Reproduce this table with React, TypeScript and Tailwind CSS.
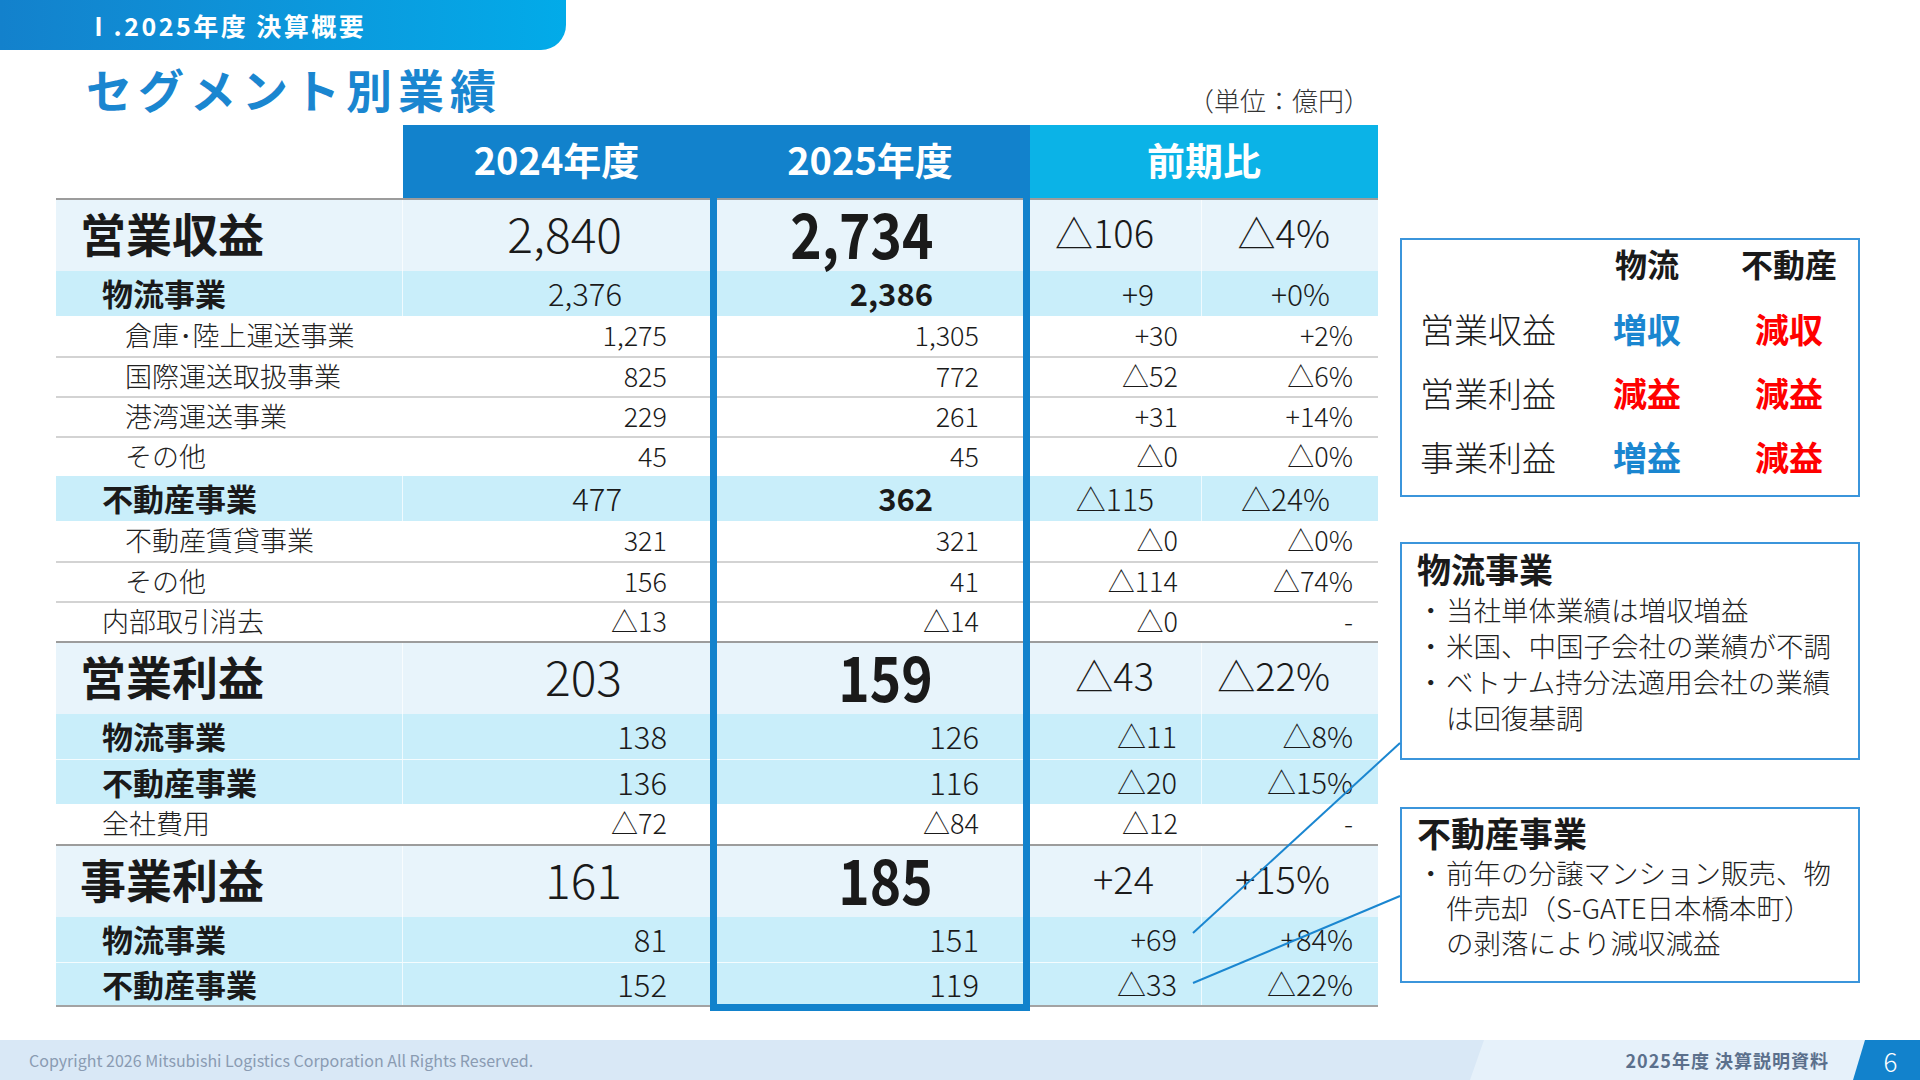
type RowType = 'big' | 'midA' | 'midB' | 'sub' | 'plain'
type Line = 'none' | 'light' | 'dark' | 'white'

interface Row {
  t: RowType
  label: string
  v24: string
  v25: string
  d: string
  p: string
  line?: Line
}

const ROWS: Row[] = [
  { t: 'big', label: '営業収益', v24: '2,840', v25: '2,734', d: '△106', p: '△4%', line: 'dark' },
  { t: 'midA', label: '物流事業', v24: '2,376', v25: '2,386', d: '+9', p: '+0%' },
  { t: 'sub', label: '倉庫･陸上運送事業', v24: '1,275', v25: '1,305', d: '+30', p: '+2%' },
  { t: 'sub', label: '国際運送取扱事業', v24: '825', v25: '772', d: '△52', p: '△6%', line: 'light' },
  { t: 'sub', label: '港湾運送事業', v24: '229', v25: '261', d: '+31', p: '+14%', line: 'light' },
  { t: 'sub', label: 'その他', v24: '45', v25: '45', d: '△0', p: '△0%', line: 'light' },
  { t: 'midA', label: '不動産事業', v24: '477', v25: '362', d: '△115', p: '△24%' },
  { t: 'sub', label: '不動産賃貸事業', v24: '321', v25: '321', d: '△0', p: '△0%' },
  { t: 'sub', label: 'その他', v24: '156', v25: '41', d: '△114', p: '△74%', line: 'light' },
  { t: 'plain', label: '内部取引消去', v24: '△13', v25: '△14', d: '△0', p: '-', line: 'light' },
  { t: 'big', label: '営業利益', v24: '203', v25: '159', d: '△43', p: '△22%', line: 'dark' },
  { t: 'midB', label: '物流事業', v24: '138', v25: '126', d: '△11', p: '△8%' },
  { t: 'midB', label: '不動産事業', v24: '136', v25: '116', d: '△20', p: '△15%', line: 'white' },
  { t: 'plain', label: '全社費用', v24: '△72', v25: '△84', d: '△12', p: '-' },
  { t: 'big', label: '事業利益', v24: '161', v25: '185', d: '+24', p: '+15%', line: 'dark' },
  { t: 'midB', label: '物流事業', v24: '81', v25: '151', d: '+69', p: '+84%' },
  { t: 'midB', label: '不動産事業', v24: '152', v25: '119', d: '△33', p: '△22%', line: 'white' },
]

const LINE: Record<Line, string> = {
  none: '',
  light: 'border-t-2 border-[#d3d3d3]',
  dark: 'border-t-2 border-[#9c9c9c]',
  white: 'border-t border-white/80',
}

interface RowStyle {
  row: string
  cell: string
  label: string
  v24: string
  v25: string
  v25Inner: string
  d: string
  p: string
  sep: boolean
}

const STYLE: Record<RowType, RowStyle> = {
  big: {
    row: 'h-[73px] bg-[#e8f4fb]',
    cell: 'pb-[8px]',
    label: 'pl-[24px] text-[46px] font-bold',
    v24: 'pr-[88px] text-[48px] font-light',
    v25: 'pr-[97px] text-[62px] font-bold',
    v25Inner: 'inline-block origin-right scale-x-[0.86]',
    d: 'pr-[47px] text-[38px] font-light',
    p: 'pr-[48px] text-[38px] font-light',
    sep: true,
  },
  midA: {
    row: 'h-[45px] bg-[#c9eefa]',
    cell: 'pb-[2px]',
    label: 'pl-[46px] text-[31px] font-bold',
    v24: 'pr-[88px] text-[31px] font-light',
    v25: 'pr-[97px] text-[31px] font-bold',
    v25Inner: '',
    d: 'pr-[47px] text-[30px] font-light',
    p: 'pr-[48px] text-[30px] font-light',
    sep: true,
  },
  midB: {
    row: 'h-[45px] bg-[#c9eefa]',
    cell: 'pb-[2px]',
    label: 'pl-[46px] text-[31px] font-bold',
    v24: 'pr-[43px] text-[31px] font-light',
    v25: 'pr-[51px] text-[31px] font-light',
    v25Inner: '',
    d: 'pr-[24px] text-[29px] font-light',
    p: 'pr-[25px] text-[29px] font-light',
    sep: true,
  },
  sub: {
    row: 'h-[40px] bg-white',
    cell: 'pb-[4px]',
    label: 'pl-[69px] text-[27px] font-light text-[#222]',
    v24: 'pr-[43px] text-[27px] font-light',
    v25: 'pr-[51px] text-[27px] font-light',
    v25Inner: '',
    d: 'pr-[24px] text-[27px] font-light',
    p: 'pr-[25px] text-[27px] font-light',
    sep: false,
  },
  plain: {
    row: 'h-[40px] bg-white',
    cell: 'pb-[4px]',
    label: 'pl-[46px] text-[27px] font-light text-[#222]',
    v24: 'pr-[43px] text-[27px] font-light',
    v25: 'pr-[51px] text-[27px] font-light',
    v25Inner: '',
    d: 'pr-[24px] text-[27px] font-light',
    p: 'pr-[25px] text-[27px] font-light',
    sep: false,
  },
}

function Table() {
  return (
    <div className="relative">
      <div className="grid h-[73px] grid-cols-[347px_307px_320px_348px] text-[38px] font-bold leading-none text-white">
        <div />
        <div className="flex items-center justify-center bg-[#1282cc] pb-[6px]">2024年度</div>
        <div className="flex items-center justify-center bg-[#1282cc] pb-[6px]">2025年度</div>
        <div className="flex items-center justify-center bg-[#0bb3e7] pb-[6px]">前期比</div>
      </div>
      {ROWS.map((r, i) => {
        const s = STYLE[r.t]
        const last = i === ROWS.length - 1
        return (
          <div
            key={i}
            className={`grid grid-cols-[347px_307px_320px_172px_176px] leading-none ${s.row} ${LINE[r.line ?? 'none']} ${last ? 'border-b-2 border-b-[#a3a3a3]' : ''}`}
          >
            <div className={`flex items-center ${s.cell} ${s.label} ${s.sep ? 'border-r border-white/70' : ''}`}>{r.label}</div>
            <div className={`flex items-center justify-end ${s.cell} ${s.v24}`}>{r.v24}</div>
            <div className={`flex items-center justify-end ${s.cell} ${s.v25}`}>
              <span className={s.v25Inner}>{r.v25}</span>
            </div>
            <div className={`flex items-center justify-end ${s.cell} ${s.d} ${s.sep ? 'border-r border-white/70' : ''}`}>{r.d}</div>
            <div className={`flex items-center justify-end ${s.cell} ${s.p}`}>{r.p}</div>
          </div>
        )
      })}
      {/* frame around the current year column */}
      <div className="pointer-events-none absolute top-0 -bottom-[4px] left-[654px] w-[320px] border-[7px] border-[#1282cc]" />
    </div>
  )
}

function Bullet({ lines }: { lines: string[] }) {
  return (
    <div className="flex">
      <span className="w-[29px] shrink-0">・</span>
      <div>
        {lines.map((l) => (
          <div key={l} className="whitespace-nowrap">
            {l}
          </div>
        ))}
      </div>
    </div>
  )
}

const SUMMARY = [
  { label: '営業収益', a: '増収', b: '減収' },
  { label: '営業利益', a: '減益', b: '減益' },
  { label: '事業利益', a: '増益', b: '減益' },
]

const tone = (v: string) => (v.startsWith('増') ? 'text-[#1a86d0]' : 'text-[#ff0000]')

export default function App() {
  return (
    <div className="relative flex h-[1080px] w-[1920px] flex-col overflow-hidden bg-white font-['Noto_Sans_CJK_JP',sans-serif] text-[#1a1a1a]">
      <div className="flex h-[50px] w-[566px] shrink-0 items-center rounded-br-[25px] bg-linear-to-r from-[#1381cc] to-[#02abe9] pl-[86px] text-[25px] font-bold leading-none tracking-[2.5px] text-white">
        Ⅰ.2025年度 決算概要
      </div>

      <div className="flex flex-1">
        <div className="ml-[56px] flex w-[1322px] flex-col">
          <div className="flex h-[75px] justify-between">
            <h1 className="ml-[30px] self-center text-[46px] font-bold leading-none tracking-[6px] text-[#1a86d0]">
              セグメント別業績
            </h1>
            <span className="mb-[10px] mr-[8px] self-end text-[26px] font-light leading-[30px] text-[#333]">
              （単位：億円）
            </span>
          </div>
          <Table />
        </div>

        <aside className="ml-[22px] flex w-[460px] flex-col">
          <div className="mt-[188px] h-[259px] border-2 border-[#3b95db] px-[18px]">
            <div className="grid grid-cols-[170px_114px_154px] leading-none">
              <div className="h-[58px]" />
              <div className="flex h-[58px] items-center justify-center pb-[12px] text-[32px] font-bold">物流</div>
              <div className="flex h-[58px] items-center justify-center pb-[12px] pl-[16px] text-[32px] font-bold">不動産</div>
              {SUMMARY.map((s) => (
                <div key={s.label} className="contents">
                  <div className="flex h-[64px] items-center pb-[2px] text-[34px] font-light">{s.label}</div>
                  <div className={`flex h-[64px] items-center justify-center pb-[2px] text-[34px] font-bold ${tone(s.a)}`}>{s.a}</div>
                  <div className={`flex h-[64px] items-center justify-center pb-[2px] pl-[16px] text-[34px] font-bold ${tone(s.b)}`}>{s.b}</div>
                </div>
              ))}
            </div>
          </div>

          <div className="mt-[45px] h-[218px] border-2 border-[#3b95db] pl-[15px] pt-[3px]">
            <div className="text-[34px] font-bold leading-[44px]">物流事業</div>
            <div className="text-[27.5px] font-light leading-[36px] text-[#222]">
              <Bullet lines={['当社単体業績は増収増益']} />
              <Bullet lines={['米国、中国子会社の業績が不調']} />
              <Bullet lines={['ベトナム持分法適用会社の業績', 'は回復基調']} />
            </div>
          </div>

          <div className="mt-[47px] h-[176px] border-2 border-[#3b95db] pl-[15px] pt-[2px]">
            <div className="text-[34px] font-bold leading-[44px]">不動産事業</div>
            <div className="text-[27.5px] font-light leading-[35px] text-[#222]">
              <Bullet lines={['前年の分譲マンション販売、物', '件売却（S-GATE日本橋本町）', 'の剥落により減収減益']} />
            </div>
          </div>
        </aside>
      </div>

      <footer className="flex h-[40px] shrink-0 bg-[#d9e8f6]">
        <div className="flex flex-1 items-center pl-[29px] text-[16px] text-[#8a9bb2]">
          Copyright 2026 Mitsubishi Logistics Corporation All Rights Reserved.
        </div>
        <div className="flex w-[395px] items-center justify-end bg-[#e6f1fa] pr-[36px] text-[18px] font-bold tracking-[1px] text-[#5b708c] [clip-path:polygon(14px_0,100%_0,100%_100%,0_100%)]">
          2025年度 決算説明資料
        </div>
        <div className="-ml-[12px] flex w-[67px] items-center justify-center bg-[#1282cc] pl-[8px] text-[26px] font-light text-white [clip-path:polygon(12px_0,100%_0,100%_100%,0_100%)]">
          6
        </div>
      </footer>

      {/* callout connectors from the table to the notes */}
      <svg className="pointer-events-none absolute inset-0" width="1920" height="1080">
        <line x1="1193" y1="933" x2="1400" y2="743" stroke="#1a86d0" strokeWidth="2" />
        <line x1="1193" y1="983" x2="1400" y2="896" stroke="#1a86d0" strokeWidth="2" />
      </svg>
    </div>
  )
}
